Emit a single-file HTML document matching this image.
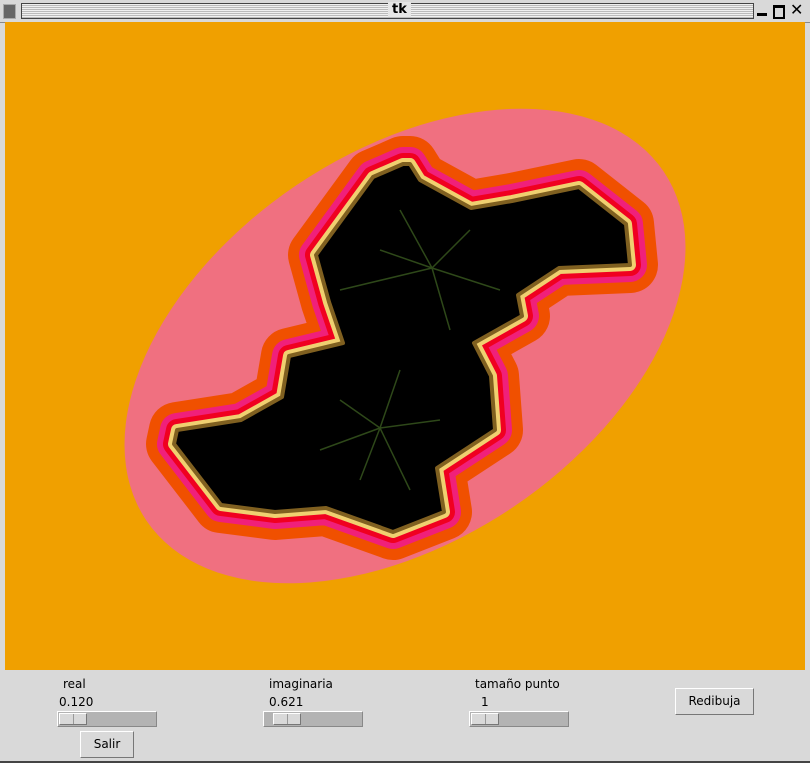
<!DOCTYPE html>
<html><head><style>
body{margin:0;width:810px;height:763px;background:#d9d9d9;font-family:"DejaVu Sans","Liberation Sans",sans-serif;font-size:12px;color:#000;position:relative;overflow:hidden}
.a{position:absolute}
.sl{position:absolute;width:100px;height:16px;background:#b3b3b3;border:1px solid #fff;border-right-color:#888;border-bottom-color:#888;box-sizing:border-box}
.th{position:absolute;top:1px;width:28px;height:12px;background:#d9d9d9;border:1px solid #fff;border-right-color:#777;border-bottom-color:#777;box-sizing:border-box}
.th:after{content:"";position:absolute;left:13px;top:0;width:1px;height:10px;background:#999}
.bt{position:absolute;background:#d9d9d9;border:1px solid #fff;border-right-color:#777;border-bottom-color:#777;box-sizing:border-box;text-align:center;font-size:12px}
</style></head><body>
<div class="a" style="left:0;top:0;width:810px;height:22px;background:#d9d9d9;border-bottom:1px solid #888"></div>
<div class="a" style="left:3px;top:4px;width:11px;height:13px;background:#666;border:1px solid #aaa"></div>
<div class="a" style="left:21px;top:3px;width:731px;height:14px;border:1px solid #444;background:repeating-linear-gradient(#f0f0f0 0 1px,#bbb 1px 2px)"></div>
<div class="a" style="left:388px;top:2px;font-weight:bold;font-size:13px;background:#e6e6e6;padding:0 4px">tk</div>
<div class="a" style="left:757px;top:13px;width:10px;height:3px;background:#000"></div>
<div class="a" style="left:773px;top:5px;width:8px;height:9px;border:2px solid #000;border-top-width:3px"></div>
<div class="a" style="left:790px;top:0px;font-weight:bold;font-size:16px">✕</div>
<svg class="a" style="left:5px;top:22px" width="800" height="648" viewBox="5 22 800 648">
<rect x="5" y="22" width="800" height="648" fill="#f0a000"/>
<ellipse cx="405" cy="346" rx="312" ry="194" transform="rotate(-34 405 346)" fill="#f07080"/>
<g stroke-linejoin="round" stroke-linecap="round">
<path d="M403,164 L373,177 316,255 329,302 343,343 289,356 282,397 241,420 177,430 174,444 221,505 275,512 326,508 393,532 444,512 437,468 495,430 491,376 474,343 522,316 518,295 559,268 630,265 626,224 579,187 512,201 471,208 420,180 410,164Z" fill="#f05000" stroke="#f05000" stroke-width="56"/>
<path d="M403,164 L373,177 316,255 329,302 343,343 289,356 282,397 241,420 177,430 174,444 221,505 275,512 326,508 393,532 444,512 437,468 495,430 491,376 474,343 522,316 518,295 559,268 630,265 626,224 579,187 512,201 471,208 420,180 410,164Z" fill="#f0207a" stroke="#f0207a" stroke-width="34"/>
<path d="M403,164 L373,177 316,255 329,302 343,343 289,356 282,397 241,420 177,430 174,444 221,505 275,512 326,508 393,532 444,512 437,468 495,430 491,376 474,343 522,316 518,295 559,268 630,265 626,224 579,187 512,201 471,208 420,180 410,164Z" fill="#f00020" stroke="#f00020" stroke-width="22"/>
<path d="M403,164 L373,177 316,255 329,302 343,343 289,356 282,397 241,420 177,430 174,444 221,505 275,512 326,508 393,532 444,512 437,468 495,430 491,376 474,343 522,316 518,295 559,268 630,265 626,224 579,187 512,201 471,208 420,180 410,164Z" fill="#f0d070" stroke="#f0d070" stroke-width="12"/>
<path d="M403,164 L373,177 316,255 329,302 343,343 289,356 282,397 241,420 177,430 174,444 221,505 275,512 326,508 393,532 444,512 437,468 495,430 491,376 474,343 522,316 518,295 559,268 630,265 626,224 579,187 512,201 471,208 420,180 410,164Z" fill="#000" stroke="#806020" stroke-width="4"/>
</g>
<g stroke="#3a5a20" stroke-width="1.5" opacity="0.8">
<path d="M432,268 L400,210 M432,268 L470,230 M432,268 L500,290 M432,268 L450,330 M432,268 L340,290 M432,268 L380,250"/>
<path d="M380,428 L340,400 M380,428 L320,450 M380,428 L360,480 M380,428 L410,490 M380,428 L440,420 M380,428 L400,370"/>
</g>
</svg>
<div class="a" style="left:0;top:670px;width:5px;height:93px;background:#d9d9d9"></div>
<div class="a" style="left:63px;top:677px">real</div>
<div class="a" style="left:59px;top:695px">0.120</div>
<div class="sl" style="left:57px;top:711px"><div class="th" style="left:1px"></div></div>
<div class="bt" style="left:80px;top:731px;width:54px;height:27px;line-height:25px">Salir</div>
<div class="a" style="left:269px;top:677px">imaginaria</div>
<div class="a" style="left:269px;top:695px">0.621</div>
<div class="sl" style="left:263px;top:711px"><div class="th" style="left:9px"></div></div>
<div class="a" style="left:475px;top:677px">tamaño punto</div>
<div class="a" style="left:481px;top:695px">1</div>
<div class="sl" style="left:469px;top:711px"><div class="th" style="left:1px"></div></div>
<div class="bt" style="left:675px;top:688px;width:79px;height:27px;line-height:25px">Redibuja</div>
<div class="a" style="left:0;top:761px;width:810px;height:2px;background:#444"></div>
</body></html>
